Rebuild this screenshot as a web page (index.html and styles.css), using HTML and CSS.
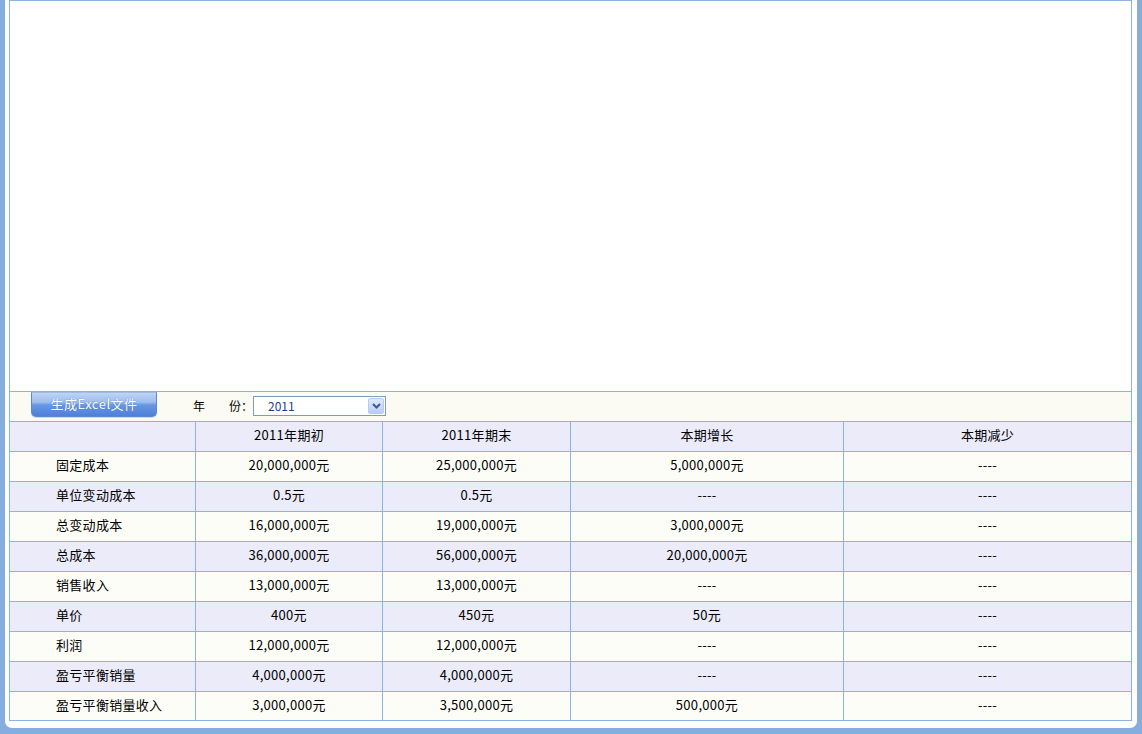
FILE: index.html
```html
<!DOCTYPE html>
<html lang="zh-CN">
<head>
<meta charset="utf-8">
<title>成本分析</title>
<link rel="stylesheet" href="styles.css">
</head>
<body>
<div class="panel">
  <div class="frame">
    <div class="chart"></div>
    <div class="toolbar">
      <div class="btn">生成Excel文件</div>
      <div class="label">年<span class="sp"></span>份：</div>
      <div class="select">
        <span class="val">2011</span>
        <span class="arrow"><svg width="9" height="6" viewBox="0 0 9 6"><path d="M1 1 L4.5 4.5 L8 1" fill="none" stroke="#3a5a9a" stroke-width="2"/></svg></span>
      </div>
    </div>
    <table class="grid">
      <colgroup>
        <col class="c1"><col class="c2"><col class="c3"><col class="c4"><col class="c5">
      </colgroup>
      <tr class="alt"><td></td><td>2011年期初</td><td>2011年期末</td><td>本期增长</td><td>本期减少</td></tr>
      <tr><td class="name">固定成本</td><td>20,000,000元</td><td>25,000,000元</td><td>5,000,000元</td><td>----</td></tr>
      <tr class="alt"><td class="name">单位变动成本</td><td>0.5元</td><td>0.5元</td><td>----</td><td>----</td></tr>
      <tr><td class="name">总变动成本</td><td>16,000,000元</td><td>19,000,000元</td><td>3,000,000元</td><td>----</td></tr>
      <tr class="alt"><td class="name">总成本</td><td>36,000,000元</td><td>56,000,000元</td><td>20,000,000元</td><td>----</td></tr>
      <tr><td class="name">销售收入</td><td>13,000,000元</td><td>13,000,000元</td><td>----</td><td>----</td></tr>
      <tr class="alt"><td class="name">单价</td><td>400元</td><td>450元</td><td>50元</td><td>----</td></tr>
      <tr><td class="name">利润</td><td>12,000,000元</td><td>12,000,000元</td><td>----</td><td>----</td></tr>
      <tr class="alt"><td class="name">盈亏平衡销量</td><td>4,000,000元</td><td>4,000,000元</td><td>----</td><td>----</td></tr>
      <tr class="last"><td class="name">盈亏平衡销量收入</td><td>3,000,000元</td><td>3,500,000元</td><td>500,000元</td><td>----</td></tr>
    </table>
  </div>
</div>
</body>
</html>
```

FILE: styles.css
```css
html, body {
  margin: 0;
  padding: 0;
}
body {
  background: #85addd;
  width: 1142px;
  height: 734px;
  overflow: hidden;
  font-family: "Noto Sans CJK SC", "Noto Sans", sans-serif;
  font-size: 13px;
  color: #000;
}
.panel {
  margin: 0 5px;
  height: 728px;
  box-sizing: border-box;
  background: #fff;
  border-radius: 0 0 7px 7px;
  padding: 0 5px 7px 4px;
}
.frame {
  border: 1px solid #8db3e4;
  height: 721px;
  box-sizing: border-box;
  display: flex;
  flex-direction: column;
  overflow: hidden;
}
.chart {
  height: 390px;
  background: #fff;
  flex: none;
}
.toolbar {
  flex: none;
  height: 29px;
  border-top: 1px solid #8db3e4;
  background: #fbfbf4;
  display: flex;
  align-items: flex-start;
}
.btn {
  margin-left: 21px;
  width: 126px;
  height: 25px;
  box-sizing: border-box;
  border: 1px solid #5d86cc;
  border-top: 1px solid #9fbce9;
  border-radius: 0 0 5px 5px;
  background: linear-gradient(#c0d4f4 0%, #9dbcee 40%, #6896e2 52%, #4d80da 100%);
  box-shadow: 0 1px 0 #c9d9f2;
  color: #fff;
  font-size: 13px;
  line-height: 22px;
  text-align: center;
  letter-spacing: 0.5px;
  text-shadow: 0 0 1px #3d68b8;
}
.label {
  margin-left: 36px;
  margin-top: 5px;
  font-size: 12px;
  line-height: 18px;
  white-space: nowrap;
}
.sp {
  display: inline-block;
  width: 24px;
}
.select {
  margin-top: 4px;
  margin-left: 0;
  width: 133px;
  height: 20px;
  box-sizing: border-box;
  border: 1px solid #7f9db9;
  background: #fff;
  display: flex;
  align-items: center;
  justify-content: space-between;
}
.val {
  margin-left: 14px;
  color: #1d3d8f;
  font-size: 12px;
  line-height: 18px;
}
.arrow {
  width: 16px;
  height: 16px;
  margin-right: 1px;
  box-sizing: border-box;
  border: 1px solid #b7cbee;
  border-radius: 2px;
  background: linear-gradient(#e0eafc, #b9cdf3);
  display: flex;
  align-items: center;
  justify-content: center;
}
.grid {
  flex: none;
  width: 100%;
  border-collapse: separate;
  border-spacing: 0;
  table-layout: fixed;
}
.c1 { width: 185px; }
.c2 { width: 187px; }
.c3 { width: 188px; }
.c4 { width: 273px; }
.c5 { width: auto; }
.grid tr {
  height: 30px;
  background: #fdfdf7;
}
.grid tr.alt {
  background: #ebebf9;
}
.grid tr.last {
  height: 29px;
}
.grid td {
  padding: 0 0 3px;
  border-top: 1px solid #8db3e4;
  border-left: 1px solid #8db3e4;
  text-align: center;
  vertical-align: middle;
  line-height: 16px;
  white-space: nowrap;
  letter-spacing: 0.3px;
}
.grid td:first-child {
  border-left: none;
}
.grid td.name {
  text-align: left;
  padding-left: 46px;
}
```
